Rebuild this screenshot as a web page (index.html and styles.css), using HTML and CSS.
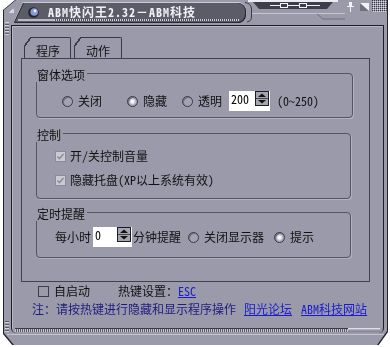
FILE: index.html
```html
<!DOCTYPE html>
<html lang="zh-CN">
<head>
    <meta charset="UTF-8">
    <meta name="viewport" content="width=device-width, initial-scale=1.0">
    <title>ABM快闪王</title>
    <link rel="stylesheet" href="styles.css">
</head>
<body>
    <div class="skin">
        <div class="window">
            <div class="titlebar">
                <div class="caption-wrap">
                    <div class="caption">
                        <div class="cap-row">
                            <svg class="logo" width="11" height="11" viewBox="0 0 11 11">
                                <circle cx="5.5" cy="5.5" r="5.3" fill="#23232e"/>
                                <circle cx="6.2" cy="5" r="3.8" fill="#8a98d6"/>
                                <circle cx="7" cy="4" r="1.4" fill="#eef0ff"/>
                            </svg>
                            <span class="cap-text">ABM快闪王2.32－ABM科技</span>
                        </div>
                        <div class="cap-rule">
                            <span class="cap-light"></span>
                            <span class="cap-ticks"></span>
                        </div>
                    </div>
                </div>
                <svg class="deco" width="100" height="25" viewBox="0 0 100 25">
                    <path d="M0 2.5 Q6 3 6.5 9 V17 Q6.5 21 2 22" fill="none" stroke="#3a3a46"/>
                    <rect x="3" y="0" width="90" height="2" fill="#ececf2"/>
                    <path d="M8 2 H88 L82 9 H14 Z" fill="#3e3e4a"/>
                    <line x1="25" y1="5.5" x2="75" y2="5.5" stroke="#f0f0f5"/>
                    <rect x="35.5" y="3.5" width="7" height="4" fill="#3e3e4a" stroke="#f0f0f5"/>
                    <rect x="54.5" y="3.5" width="7" height="4" fill="#3e3e4a" stroke="#f0f0f5"/>
                    <line x1="7" y1="13.5" x2="100" y2="13.5" stroke="#c6c6d2"/>
                    <path d="M72 14 L78 19 H100" fill="none" stroke="#6c6c7a"/>
                </svg>
                <svg class="pin" width="7" height="10" viewBox="0 0 7 10">
                    <rect x="2" y="0" width="3" height="4" fill="#f0f0f5"/>
                    <rect x="0" y="4" width="7" height="1" fill="#f0f0f5"/>
                    <rect x="3" y="5" width="1" height="5" fill="#f0f0f5"/>
                </svg>
                <svg class="restore" width="9" height="8" viewBox="0 0 9 8">
                    <rect x="0" y="0" width="9" height="8" fill="#f2f2f6"/>
                    <polygon points="0,0 9,8 0,8" fill="#70707e"/>
                </svg>
                <svg class="grip" width="15" height="12" viewBox="0 0 15 12">
                    <defs>
                        <pattern id="dots" width="2" height="2" patternUnits="userSpaceOnUse">
                            <rect width="1" height="1" fill="#3a3a46"/>
                            <rect x="1" y="1" width="1" height="1" fill="#d8d8e2"/>
                        </pattern>
                    </defs>
                    <rect width="15" height="12" fill="url(#dots)"/>
                </svg>
            </div>

            <div class="frame">
                <div class="tabs">
                    <div class="tab"><span class="tab-label t1">程序</span></div>
                    <div class="tab"><span class="tab-label t2">动作</span></div>
                </div>

                <div class="panel">
                    <div class="group g1">
                        <div class="group-title">窗体选项</div>
                        <div class="row r-window">
                            <label class="opt w65"><span class="radio"></span>关闭</label>
                            <label class="opt w55"><span class="radio on"></span>隐藏</label>
                            <label class="opt"><span class="radio"></span>透明</label>
                            <div class="numbox w41">
                                <input class="num" type="text" value="200">
                                <svg class="spin" width="14" height="15" viewBox="0 0 14 15">
                                    <rect x="0.5" y="0.5" width="13" height="14" fill="#a6a6b2" stroke="#1c1c22"/>
                                    <polygon points="7,2.5 11,6 3,6" fill="#111"/>
                                    <line x1="1" y1="7.5" x2="13" y2="7.5" stroke="#44444e"/>
                                    <polygon points="3,9 11,9 7,12.5" fill="#111"/>
                                </svg>
                            </div>
                            <span class="range">(0~250)</span>
                        </div>
                    </div>

                    <div class="group g2">
                        <div class="group-title">控制</div>
                        <label class="row r-check">
                            <svg class="check" width="11" height="11" viewBox="0 0 11 11">
                                <rect x="0.5" y="0.5" width="10" height="10" fill="#cacad4" stroke="#8a8a98"/>
                                <path d="M2.5 5.5 L4.5 7.5 L8.5 3" fill="none" stroke="#8c8c9a" stroke-width="1.6"/>
                            </svg>
                            开/关控制音量
                        </label>
                        <label class="row r-check">
                            <svg class="check" width="11" height="11" viewBox="0 0 11 11">
                                <rect x="0.5" y="0.5" width="10" height="10" fill="#cacad4" stroke="#8a8a98"/>
                                <path d="M2.5 5.5 L4.5 7.5 L8.5 3" fill="none" stroke="#8c8c9a" stroke-width="1.6"/>
                            </svg>
                            隐藏托盘(XP以上系统有效)
                        </label>
                    </div>

                    <div class="group g3">
                        <div class="group-title">定时提醒</div>
                        <div class="row r-timer">
                            <span>每小时</span>
                            <div class="numbox w39">
                                <input class="num" type="text" value="0">
                                <svg class="spin" width="14" height="15" viewBox="0 0 14 15">
                                    <rect x="0.5" y="0.5" width="13" height="14" fill="#a6a6b2" stroke="#1c1c22"/>
                                    <polygon points="7,2.5 11,6 3,6" fill="#111"/>
                                    <line x1="1" y1="7.5" x2="13" y2="7.5" stroke="#44444e"/>
                                    <polygon points="3,9 11,9 7,12.5" fill="#111"/>
                                </svg>
                            </div>
                            <span class="after-num">分钟提醒</span>
                            <label class="opt ml7"><span class="radio"></span>关闭显示器</label>
                            <label class="opt ml10"><span class="radio on"></span>提示</label>
                        </div>
                    </div>
                </div>

                <div class="row r-foot">
                    <svg class="check" width="11" height="11" viewBox="0 0 11 11">
                        <rect x="0.5" y="0.5" width="10" height="10" fill="#9a9aab" stroke="#3c3c48"/>
                    </svg>
                    <span class="auto">自启动</span>
                    <span class="hotkey">热键设置：</span><a class="link" href="#">ESC</a>
                </div>
                <div class="row r-note">
                    <span class="note">注：请按热键进行隐藏和显示程序操作</span>
                    <a class="link l1" href="#">阳光论坛</a>
                    <a class="link l2" href="#">ABM科技网站</a>
                </div>

                <div class="frame-rule">
                    <span class="rule-ticks"></span>
                    <span class="rule-end"></span>
                </div>
            </div>
            <div class="base"></div>
        </div>
    </div>
</body>
</html>
```

FILE: styles.css
```css
* {
    margin: 0;
    padding: 0;
    box-sizing: border-box;
}

body {
    background: #fff;
    color: #111;
    font: 12px/14px "Noto Sans Mono CJK SC", "Noto Sans CJK SC", sans-serif;
}

.skin {
    filter: drop-shadow(1px 0 0 #24242c) drop-shadow(-1px 0 0 #24242c) drop-shadow(0 1px 0 #24242c);
}

.window {
    margin-left: 4px;
    width: 383px;
    height: 345px;
    background-color: #9a9aab;
    background-image:
        repeating-linear-gradient(0deg, #d2d2dc 0 1px, #5c5c68 1px 2px, transparent 2px 3px),
        repeating-linear-gradient(0deg, #d2d2dc 0 1px, #5c5c68 1px 2px, transparent 2px 3px),
        linear-gradient(135deg, transparent 50%, #d6d6e0 50%);
    background-size: 4px 13px, 4px 12px, 6px 4px;
    background-position: 1px 22px, 1px 320px, 4px 9px;
    background-repeat: no-repeat;
    display: flex;
    flex-direction: column;
    clip-path: polygon(12px 0, 100% 0, 100% calc(100% - 14px), calc(100% - 10px) 100%, 10px 100%, 0 calc(100% - 12px), 0 10px);
}

/* title bar */
.titlebar {
    height: 25px;
    display: flex;
    align-items: flex-start;
    flex-shrink: 0;
}

.caption-wrap {
    margin: 3px 0 0 11px;
    filter: drop-shadow(1px 0 0 #2a2a32) drop-shadow(-1px 0 0 #2a2a32) drop-shadow(0 1px 0 #2a2a32) drop-shadow(0 -1px 0 #cacad6);
}

.caption {
    width: 230px;
    height: 19px;
    background: #5c5c68;
    border-radius: 0 8px 8px 0;
    clip-path: polygon(9px 0, 100% 0, 100% 100%, 0 100%);
    display: flex;
    flex-direction: column;
}

.cap-row {
    display: flex;
    align-items: center;
    height: 14px;
    margin-top: 2px;
}

.logo {
    margin-left: 13px;
}

.cap-text {
    margin-left: 9px;
    color: #f0f0f6;
    font-weight: bold;
    letter-spacing: 1px;
}

.cap-rule {
    display: flex;
    height: 3px;
    margin-top: auto;
    margin-bottom: 1px;
}

.cap-light {
    width: 36px;
    margin-left: 3px;
    background: #b8b8c6;
}

.cap-ticks {
    flex: 1;
    margin-right: 6px;
    background: repeating-linear-gradient(90deg, #cfcfda 0 1px, #4c4c58 1px 2px);
}

.pin {
    margin: 2px 0 0 2px;
}

.restore {
    margin: 3px 0 0 6px;
}

.grip {
    margin-left: 3px;
}

/* inner frame */
.frame {
    margin-left: 7px;
    width: 373px;
    height: 308px;
    flex-shrink: 0;
    border: 1px solid #1e1e26;
    border-bottom: none;
    border-radius: 0 0 5px 5px;
    box-shadow: inset 1px 1px 0 #b6b6c4;
    padding-top: 11px;
    display: flex;
    flex-direction: column;
}

.tabs {
    display: flex;
    height: 21px;
    margin-left: 12px;
}

.tab {
    display: flex;
}

.tab + .tab {
    margin-left: 3px;
}

.tab::before {
    content: "";
    width: 7px;
    background:
        linear-gradient(to bottom right, transparent 43%, #3a3a46 43% 57%, transparent 57%) 0 0 / 7px 10px no-repeat,
        linear-gradient(#3a3a46, #3a3a46) 0 10px / 1px 11px no-repeat;
}

.tab-label {
    border-top: 1px solid #3a3a46;
    border-right: 1px solid #3a3a46;
    border-top-right-radius: 2px;
    padding: 6px 0 0 5px;
}

.t1 {
    width: 40px;
}

.t2 {
    width: 41px;
}

.panel {
    margin-left: 9px;
    width: 349px;
    height: 224px;
    flex-shrink: 0;
    border: 1px solid #42424e;
    padding: 14px 0 0 14px;
}

.group {
    border: 1px solid #55555f;
    border-radius: 4px;
    box-shadow: 1px 1px 0 #b2b2c0;
}

.g1 {
    width: 317px;
    height: 45px;
    padding-left: 25px;
}

.g2 {
    width: 315px;
    height: 66px;
    margin-top: 15px;
    padding-left: 18px;
}

.g3 {
    width: 315px;
    height: 46px;
    margin-top: 13px;
    padding-left: 18px;
}

.group-title {
    width: max-content;
    margin: -6px 0 0 -20px;
    padding: 0 2px;
    background: #9a9aab;
}

.g1 .group-title {
    margin-left: -27px;
}

.row {
    display: flex;
    align-items: center;
    height: 20px;
}

.r-window {
    margin-top: 9px;
}

.opt {
    display: flex;
    align-items: center;
}

.w65 {
    width: 65px;
}

.w55 {
    width: 55px;
}

.radio {
    width: 11px;
    height: 11px;
    margin-right: 5px;
    border: 1px solid #3a3a46;
    border-radius: 50%;
    background: #a2a2b2;
    box-shadow: inset 1px 1px 0 #727282;
}

.radio.on {
    background: radial-gradient(circle, #f6f6fa 0 1.5px, #c8c8d4 2.5px, #a2a2b2 4px);
}

.numbox {
    display: flex;
    align-items: flex-start;
    height: 20px;
    background: #fff;
    margin-left: 7px;
}

.w41 {
    width: 41px;
}

.w39 {
    width: 39px;
    margin-left: 2px;
}

.num {
    width: 0;
    flex: 1;
    height: 16px;
    border: none;
    outline: none;
    background: transparent;
    padding-left: 2px;
    font: 12px/16px "Noto Sans Mono CJK SC", "Liberation Sans", sans-serif;
    color: #000;
}

.spin {
    margin-right: 1px;
}

.range {
    margin-left: 7px;
}

.r-check {
    margin-top: 4px;
}

.check {
    margin-right: 4px;
    flex-shrink: 0;
}

.r-timer {
    margin-top: 6px;
}

.after-num {
    margin-left: 1px;
}

.ml7 {
    margin-left: 7px;
}

.ml10 {
    margin-left: 10px;
}

/* bottom rows */
.r-foot {
    height: 18px;
    margin-left: 26px;
}

.r-foot .check {
    margin-right: 5px;
}

.hotkey {
    margin-left: 28px;
}

.link {
    color: #1a1ad0;
    text-decoration: underline;
}

.r-note {
    height: 18px;
    margin-left: 20px;
}

.note {
    color: #1c1c7e;
}

.l1 {
    margin-left: 8px;
}

.l2 {
    margin-left: 9px;
}

.frame-rule {
    display: flex;
    height: 4px;
    margin: auto 3px 1px 3px;
}

.rule-ticks {
    flex: 1;
    border-top: 1px solid #3a3a46;
    background: repeating-linear-gradient(90deg, #c6c6d2 0 1px, #5a5a66 1px 2px);
}

.rule-end {
    width: 32px;
    border-top: 1px solid #e0e0ea;
    background: linear-gradient(#b8b8c6, #7a7a88);
}

.base {
    margin: 1px 3px 0 3px;
    border-top: 1px solid #c4c4d0;
}
```
